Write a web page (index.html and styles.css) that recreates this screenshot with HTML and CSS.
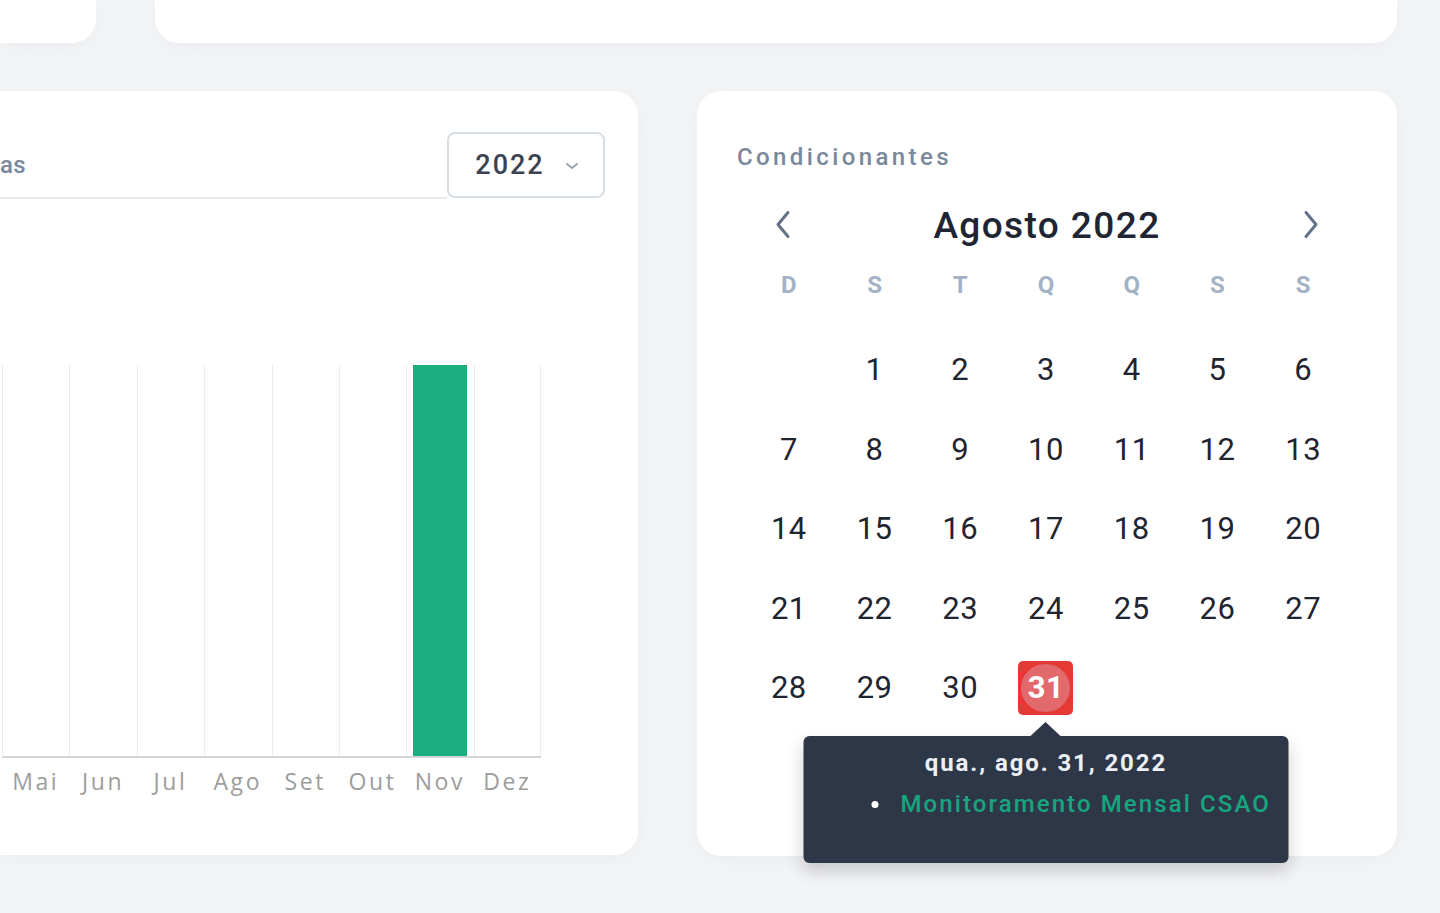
FILE: index.html
```html
<!DOCTYPE html>
<html lang="pt-BR">
<head>
<meta charset="utf-8">
<title>Painel de Condicionantes</title>
<link rel="stylesheet" href="styles.css">
</head>
<body>
<div class="page">
  <div class="top-row">
    <div class="card card-top card-top-left"></div>
    <div class="card card-top"></div>
  </div>
  <div class="main-row">
    <section class="card chart-card">
      <div class="chart-head">
        <h2 class="chart-title">as</h2>
        <button class="year-select" type="button">
          <span class="year-value">2022</span>
          <svg class="year-chevron" width="14" height="8" viewBox="0 0 14 8" aria-hidden="true"><path d="M2 2 L7 6 L12 2" fill="none" stroke="#9ca3af" stroke-width="2" stroke-linecap="round" stroke-linejoin="round"/></svg>
        </button>
      </div>
      <div class="chart">
        <div class="plot">
          <div class="band"></div>
          <div class="band"></div>
          <div class="band"></div>
          <div class="band"></div>
          <div class="band"></div>
          <div class="band"></div>
          <div class="band"><div class="bar" style="height:100%"></div></div>
          <div class="band"></div>
        </div>
        <div class="labels">
          <span>Mai</span><span>Jun</span><span>Jul</span><span>Ago</span><span>Set</span><span>Out</span><span>Nov</span><span>Dez</span>
        </div>
      </div>
    </section>
    <section class="card cal-card">
      <h2 class="cal-title">Condicionantes</h2>
      <div class="cal-nav">
        <button class="nav-btn" type="button" aria-label="Mês anterior">
          <svg width="20" height="30" viewBox="0 0 20 30" aria-hidden="true"><path d="M15 2.5 L5 14.5 L15 26.5" fill="none" stroke="#637189" stroke-width="3" stroke-linecap="round" stroke-linejoin="round"/></svg>
        </button>
        <div class="cal-month">Agosto 2022</div>
        <button class="nav-btn" type="button" aria-label="Próximo mês">
          <svg width="20" height="30" viewBox="0 0 20 30" aria-hidden="true"><path d="M5 2.5 L15 14.5 L5 26.5" fill="none" stroke="#637189" stroke-width="3" stroke-linecap="round" stroke-linejoin="round"/></svg>
        </button>
      </div>
      <div class="weekdays">
        <span>D</span><span>S</span><span>T</span><span>Q</span><span>Q</span><span>S</span><span>S</span>
      </div>
      <div class="days">
        <span class="day"></span>
        <span class="day">1</span><span class="day">2</span><span class="day">3</span><span class="day">4</span><span class="day">5</span><span class="day">6</span>
        <span class="day">7</span><span class="day">8</span><span class="day">9</span><span class="day">10</span><span class="day">11</span><span class="day">12</span><span class="day">13</span>
        <span class="day">14</span><span class="day">15</span><span class="day">16</span><span class="day">17</span><span class="day">18</span><span class="day">19</span><span class="day">20</span>
        <span class="day">21</span><span class="day">22</span><span class="day">23</span><span class="day">24</span><span class="day">25</span><span class="day">26</span><span class="day">27</span>
        <span class="day">28</span><span class="day">29</span><span class="day">30</span>
        <span class="day day-event">
          <span class="day-mark">31</span>
          <div class="tooltip">
            <div class="tooltip-date">qua., ago. 31, 2022</div>
            <ul class="tooltip-list">
              <li><span class="dot"></span><span class="event">Monitoramento Mensal CSAO</span></li>
            </ul>
          </div>
        </span>
      </div>
    </section>
  </div>
</div>
</body>
</html>
```

FILE: styles.css
```css
* { box-sizing: border-box; }

html, body {
  margin: 0;
  padding: 0;
}

body {
  background: #f3f4f6;
  width: 1440px;
  height: 913px;
  overflow: hidden;
  font-family: Roboto, "Liberation Sans", sans-serif;
}

.card {
  background: #ffffff;
  box-shadow: 0 4px 22px rgba(30, 40, 60, 0.035);
}

.top-row {
  display: grid;
  grid-template-columns: 96px 1242px;
  column-gap: 59px;
  height: 43px;
}

.card-top {
  border-radius: 0 0 24px 24px;
}

.card-top-left {
  border-radius: 0 0 24px 0;
}

.main-row {
  margin-top: 48px;
  display: grid;
  grid-template-columns: 638px 700px;
  column-gap: 59px;
  align-items: start;
}

/* Chart card */
.chart-card {
  height: 764px;
  border-radius: 0 24px 24px 0;
  padding: 41px 33px 0 0;
}

.chart-head {
  display: flex;
  align-items: stretch;
  height: 66px;
}

.chart-title {
  flex: 1;
  margin: 0;
  display: flex;
  align-items: center;
  border-bottom: 2px solid #e6e9ed;
  margin-bottom: -1px;
  font-size: 24px;
  font-weight: 500;
  letter-spacing: 0.4px;
  color: #7a889c;
}

.year-select {
  width: 158px;
  height: 66px;
  border: 2px solid #d7dee3;
  border-radius: 8px;
  background: #ffffff;
  display: flex;
  align-items: center;
  justify-content: center;
  gap: 20px;
  padding: 0 0 0 2px;
  font-family: Roboto, "Liberation Sans", sans-serif;
  font-size: 27px;
  font-weight: 500;
  letter-spacing: 2px;
  color: #3b4250;
  cursor: pointer;
}

.year-chevron {
  display: block;
  margin-top: 2px;
}

.chart {
  margin-top: 167px;
}

.plot {
  margin-left: 2px;
  width: 539px;
  height: 393px;
  display: grid;
  grid-template-columns: repeat(8, 1fr);
  border-bottom: 2px solid #d6d6d6;
}

.band {
  border-left: 1px solid #ececec;
  display: flex;
  justify-content: center;
  align-items: flex-end;
}

.band:last-child {
  border-right: 1px solid #ececec;
}

.bar {
  width: 54px;
  background: #19ad80;
}

.labels {
  margin-left: 2px;
  width: 539px;
  display: grid;
  grid-template-columns: repeat(8, 1fr);
  font-family: "Open Sans", "Liberation Sans", sans-serif;
  font-size: 23px;
  line-height: 46px;
  color: #9d9d9d;
  text-align: center;
  letter-spacing: 2.6px;
}

/* Calendar card */
.cal-card {
  height: 765px;
  border-radius: 24px;
  padding: 52px 40px 0;
}

.cal-title {
  margin: 0;
  font-size: 24px;
  line-height: 29px;
  font-weight: 500;
  letter-spacing: 3.4px;
  color: #7a889c;
}

.cal-nav {
  margin-top: 25px;
  height: 56px;
  display: flex;
  align-items: center;
  justify-content: space-between;
  padding: 0 36px;
}

.nav-btn {
  width: 20px;
  height: 30px;
  padding: 0;
  border: 0;
  background: none;
  display: flex;
  cursor: pointer;
}

.cal-month {
  font-size: 37px;
  font-weight: 500;
  letter-spacing: 1.4px;
  color: #1e2533;
}

.weekdays {
  margin-top: 12px;
  margin-left: 9px;
  width: 600px;
  height: 40px;
  display: grid;
  grid-template-columns: repeat(7, 1fr);
  text-align: center;
  line-height: 40px;
  font-size: 24px;
  font-weight: 700;
  color: #a4b2c6;
}

.days {
  margin-top: 25px;
  margin-left: 9px;
  width: 600px;
  display: grid;
  grid-template-columns: repeat(7, 1fr);
  grid-auto-rows: 79.5px;
  font-size: 31px;
  color: #1f2530;
  letter-spacing: 0.5px;
}

.day {
  display: flex;
  align-items: center;
  justify-content: center;
}

.day-event {
  position: relative;
}

.day-mark {
  position: relative;
  width: 55px;
  height: 54px;
  border-radius: 5px;
  background: #e53935;
  display: flex;
  align-items: center;
  justify-content: center;
  color: #ffffff;
  font-weight: 700;
  z-index: 0;
}

.day-mark::before {
  content: "";
  position: absolute;
  left: 3px;
  top: 3px;
  width: 49px;
  height: 48px;
  border-radius: 50%;
  background: #e26a6c;
  z-index: -1;
}

.tooltip {
  position: absolute;
  top: 88px;
  left: 50%;
  transform: translateX(-50%);
  width: 485px;
  height: 127px;
  background: #2e3748;
  border-radius: 6px;
  box-shadow: 0 8px 18px rgba(0, 0, 0, 0.18);
  padding-top: 12px;
  z-index: 5;
  letter-spacing: 0;
}

.tooltip::before {
  content: "";
  position: absolute;
  top: -14px;
  left: 50%;
  transform: translateX(-50%);
  border-left: 15px solid transparent;
  border-right: 15px solid transparent;
  border-bottom: 14px solid #2e3748;
}

.tooltip-date {
  text-align: center;
  font-size: 24px;
  line-height: 30px;
  font-weight: 700;
  color: #eceff3;
  letter-spacing: 1.9px;
}

.tooltip-list {
  list-style: none;
  margin: 11px 0 0;
  padding: 0 0 0 68px;
}

.tooltip-list li {
  display: flex;
  align-items: center;
  line-height: 30px;
}

.dot {
  width: 7px;
  height: 7px;
  border-radius: 50%;
  background: #ffffff;
  margin-right: 22px;
}

.event {
  font-size: 24px;
  font-weight: 500;
  color: #17a57f;
  letter-spacing: 2.1px;
}
```
